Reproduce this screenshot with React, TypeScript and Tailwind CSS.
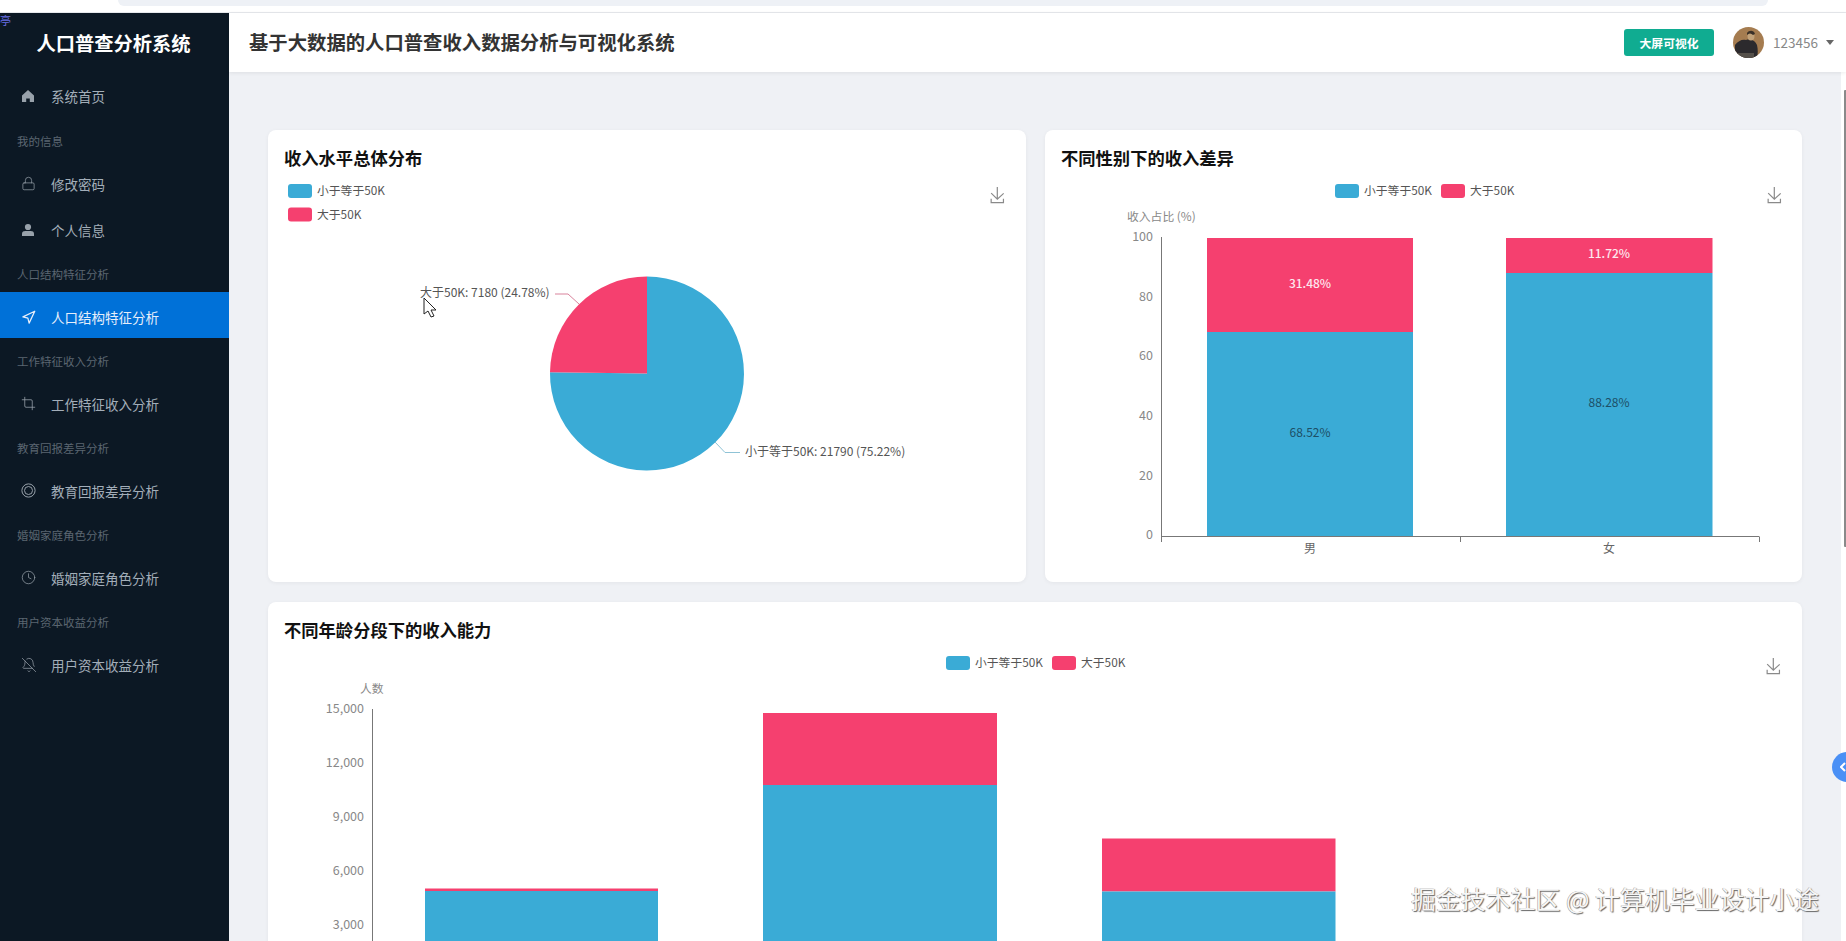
import { Crop, BellOff, Clock, Lock, Navigation } from 'lucide-react';
import type { ReactNode } from 'react';

const BLUE = '#3aabd6';
const PINK = '#f5406f';

function HomeIcon() {
  return (
    <svg width="14" height="14" viewBox="0 0 14 14" fill="currentColor">
      <path d="M7 1 L13 6.4 V13 H8.8 V9.4 H5.2 V13 H1 V6.4 Z" />
    </svg>
  );
}

function UserIcon() {
  return (
    <svg width="14" height="14" viewBox="0 0 14 14" fill="currentColor">
      <circle cx="7" cy="4" r="3.1" />
      <path d="M1 13 V10.6 C1 8.8 2.6 8 4.2 8 H9.8 C11.4 8 13 8.8 13 10.6 V13 Z" />
    </svg>
  );
}

function RingIcon() {
  return (
    <svg width="15" height="15" viewBox="0 0 15 15" fill="none" stroke="currentColor" strokeWidth="1">
      <circle cx="7.5" cy="7.5" r="6.6" />
      <circle cx="7.5" cy="7.5" r="4" />
    </svg>
  );
}

type NavEntry = { group?: string; label: string; icon: ReactNode; active?: boolean };

const nav: NavEntry[] = [
  { label: '系统首页', icon: <HomeIcon /> },
  { group: '我的信息', label: '修改密码', icon: <Lock size={15} strokeWidth={1.15} /> },
  { label: '个人信息', icon: <UserIcon /> },
  { group: '人口结构特征分析', label: '人口结构特征分析', icon: <Navigation size={15} strokeWidth={2} />, active: true },
  { group: '工作特征收入分析', label: '工作特征收入分析', icon: <Crop size={15} strokeWidth={1.25} /> },
  { group: '教育回报差异分析', label: '教育回报差异分析', icon: <RingIcon /> },
  { group: '婚姻家庭角色分析', label: '婚姻家庭角色分析', icon: <Clock size={15} strokeWidth={1.15} /> },
  { group: '用户资本收益分析', label: '用户资本收益分析', icon: <BellOff size={16} strokeWidth={1.1} /> },
];

function Sidebar() {
  return (
    <aside className="w-[229px] shrink-0 bg-[#0c1824]">
      <div className="h-[58.6px] flex items-center justify-center pt-[2px] pr-[2px] text-[19.3px] font-bold text-white">
        人口普查分析系统
      </div>
      {nav.map((item) => (
        <div key={item.label}>
          {item.group && (
            <div className="h-[40.7px] pt-[6px] pl-[17px] flex items-center text-[11.5px] text-[#5b6671]">
              {item.group}
            </div>
          )}
          <div
            className={`h-[46.3px] pt-[4px] pl-[21px] flex items-center text-[13.5px] ${
              item.active ? 'bg-[#0071d8] text-[#e6eefa]' : 'text-[#a3aeb9]'
            } ${item.group || item.label !== '系统首页' ? '' : 'pb-[2px]'}`}
          >
            <span className={`w-[30px] flex ${item.active ? 'text-[#e6eefa]' : 'text-[#98a1aa]'}`}>{item.icon}</span>
            {item.label}
          </div>
        </div>
      ))}
    </aside>
  );
}

function Header() {
  return (
    <header className="h-[59px] shrink-0 bg-white shadow-[0_1px_4px_rgba(0,0,0,0.08)] flex items-center pl-[20px] pr-[12px] relative">
      <h1 className="text-[19.35px] font-bold text-[#333]">基于大数据的人口普查收入数据分析与可视化系统</h1>
      <button className="ml-auto w-[90px] h-[27px] rounded-[3px] bg-[#10ac91] text-white text-[11.8px] font-bold">
        大屏可视化
      </button>
      <svg className="ml-[19px]" width="31" height="31" viewBox="0 0 31 31">
        <clipPath id="avatar-clip">
          <circle cx="15.5" cy="15.5" r="15.5" />
        </clipPath>
        <g clipPath="url(#avatar-clip)">
          <rect width="31" height="31" fill="#a57c50" />
          <path d="M2 31 V18 C5 14 9 12 13 13 C16 11 22 13 24 18 C25 22 25 27 24 31 Z" fill="#2c2a2d" />
          <ellipse cx="18" cy="9" rx="3.5" ry="4.5" fill="#c2a27a" />
          <path d="M14 6 C16 3 21 3 22 7 L20 8 C18 6 16 6 14 8 Z" fill="#3a3028" />
          <rect x="4" y="26" width="17" height="5" fill="#55504a" />
        </g>
      </svg>
      <span className="ml-[9px] text-[13.5px] text-[#888]">123456</span>
      <svg className="ml-[8px]" width="8" height="5" viewBox="0 0 8 5" fill="#666">
        <path d="M0 0 H8 L4 5 Z" />
      </svg>
    </header>
  );
}

function SaveIcon({ x, y }: { x: number; y: number }) {
  return (
    <path
      transform={`translate(${x},${y}) scale(0.25,0.27)`}
      d="M4.7,22.9 L29.3,45.5 L54.7,23.4 M4.6,43.6 L4.6,58 L53.8,58 L53.8,43.6 M29.2,45.1 L29.2,0"
      fill="none"
      stroke="#8a8a8a"
      strokeWidth="1.2"
      vectorEffect="non-scaling-stroke"
    />
  );
}

function LegendItem({ x, y, color, label }: { x: number; y: number; color: string; label: string }) {
  return (
    <g>
      <rect x={x} y={y} width="24" height="14" rx="3" fill={color} />
      <text x={x + 29} y={y + 11} fontSize="11.8" fill="#555">
        {label}
      </text>
    </g>
  );
}

function YTicks({ x, ticks }: { x: number; ticks: [string, number][] }) {
  return (
    <g fontSize="12.5" fill="#888" textAnchor="end">
      {ticks.map(([label, y]) => (
        <text key={label} x={x} y={y + 4}>
          {label}
        </text>
      ))}
    </g>
  );
}

function PieChart() {
  return (
    <svg className="block" width="758" height="405" viewBox="268 177 758 405">
      <LegendItem x={288} y={184} color={BLUE} label="小于等于50K" />
      <LegendItem x={288} y={207.5} color={PINK} label="大于50K" />
      <SaveIcon x={990} y={187} />
      <path d="M647 373.5 L647 276.5 A97 97 0 1 1 550 372.2 Z" fill={BLUE} />
      <path d="M647 373.5 L550 372.2 A97 97 0 0 1 647 276.5 Z" fill={PINK} />
      <path d="M579 304 L568 294 L555 294" fill="none" stroke="#d9839c" />
      <path d="M715 442 L725 452.5 L740 452.5" fill="none" stroke="#8fc3d6" />
      <text x="420" y="297" fontSize="12" fill="#555">
        大于50K: 7180 (24.78%)
      </text>
      <text x="745" y="456" fontSize="12" fill="#555">
        小于等于50K: 21790 (75.22%)
      </text>
      {/* mouse pointer caught in the capture */}
      <path
        d="M424 298 L424 314 L428 311 L431 317 L434 316 L431 310 L436 310 Z"
        fill="#fff"
        stroke="#222"
        strokeWidth="1"
      />
    </svg>
  );
}

function GenderChart() {
  return (
    <svg className="block" width="757" height="405" viewBox="1045 177 757 405">
      <LegendItem x={1335} y={184} color={BLUE} label="小于等于50K" />
      <LegendItem x={1441} y={184} color={PINK} label="大于50K" />
      <SaveIcon x={1767} y={187} />
      <text x="1127" y="221" fontSize="11.8" fill="#888">
        收入占比 (%)
      </text>
      <YTicks
        x={1153}
        ticks={[
          ['100', 237],
          ['80', 297],
          ['60', 356],
          ['40', 416],
          ['20', 476],
          ['0', 535],
        ]}
      />
      <rect x="1207" y="238" width="206" height="94" fill={PINK} />
      <rect x="1207" y="332" width="206" height="205" fill={BLUE} />
      <rect x="1506" y="238" width="206.5" height="35" fill={PINK} />
      <rect x="1506" y="273" width="206.5" height="264" fill={BLUE} />
      <path d="M1161.5 237 V537 M1161.5 536.5 H1759.5 M1161.5 537 V542 M1460.5 537 V542 M1759.5 537 V542" fill="none" stroke="#777" />
      <g fontSize="12" textAnchor="middle">
        <text x="1310" y="288" fill="#fde8ee" fontWeight="500">
          31.48%
        </text>
        <text x="1609" y="258" fill="#fde8ee" fontWeight="500">
          11.72%
        </text>
        <text x="1310" y="437" fill="#1d4f66">
          68.52%
        </text>
        <text x="1609" y="407" fill="#1d4f66">
          88.28%
        </text>
        <text x="1310" y="553" fill="#666">
          男
        </text>
        <text x="1609" y="553" fill="#666">
          女
        </text>
      </g>
    </svg>
  );
}

function AgeChart() {
  return (
    <svg className="block" width="1534" height="301" viewBox="268 649 1534 301">
      <LegendItem x={946} y={656} color={BLUE} label="小于等于50K" />
      <LegendItem x={1052} y={656} color={PINK} label="大于50K" />
      <SaveIcon x={1766} y={658} />
      <text x="360" y="693" fontSize="11.8" fill="#888">
        人数
      </text>
      <YTicks
        x={364}
        ticks={[
          ['15,000', 709],
          ['12,000', 763],
          ['9,000', 817],
          ['6,000', 871],
          ['3,000', 925],
        ]}
      />
      <rect x="425" y="888.5" width="233" height="2.5" fill={PINK} />
      <rect x="425" y="891" width="233" height="60" fill={BLUE} />
      <rect x="763" y="713" width="234" height="72" fill={PINK} />
      <rect x="763" y="785" width="234" height="170" fill={BLUE} />
      <rect x="1102" y="838.5" width="233.5" height="53" fill={PINK} />
      <rect x="1102" y="891.5" width="233.5" height="60" fill={BLUE} />
      <path d="M372.5 709 V950" fill="none" stroke="#777" />
    </svg>
  );
}

function Card({ title, children }: { title: string; children: ReactNode }) {
  return (
    <section className="bg-white rounded-[8px] shadow-[0_1px_4px_rgba(0,0,0,0.05)]">
      <h2 className="h-[47px] pl-[16px] pt-[9px] flex items-center text-[17.3px] font-bold text-[#111]">{title}</h2>
      {children}
    </section>
  );
}

export default function App() {
  return (
    <div className="relative w-[1846px] h-[941px] overflow-hidden bg-white font-['Noto_Sans_CJK_SC','Noto_Sans',sans-serif]">
      <div className="h-[13px] border-b border-[#e6e8ec] bg-white">
        <div className="ml-[118px] w-[1650px] h-[6px] rounded-b-[8px] bg-[#eef1f6]" />
      </div>
      <div className="flex h-[928px]">
        <Sidebar />
        <div className="flex-1 flex flex-col min-w-0">
          <Header />
          <div className="flex flex-1 min-h-0">
            <main className="w-[1612px] bg-[#eff1f5] pt-[58px] px-[39px] overflow-hidden">
              <div className="grid grid-cols-[758px_757px] gap-x-[19px] gap-y-[20px]">
                <Card title="收入水平总体分布">
                  <PieChart />
                </Card>
                <Card title="不同性别下的收入差异">
                  <GenderChart />
                </Card>
                <div className="col-span-2">
                  <Card title="不同年龄分段下的收入能力">
                    <AgeChart />
                  </Card>
                </div>
              </div>
            </main>
            <div className="w-[5px] bg-white pt-[18px] pl-[3px]">
              <div className="h-[457px] bg-[#8a8a8a] rounded-l-[1px]" />
            </div>
          </div>
        </div>
      </div>

      {/* overlays captured with the page */}
      <span className="absolute left-0 top-[12px] text-[11px] leading-[16px] text-[#6a70e6]">亭</span>
      <div className="absolute left-[1832px] top-[752px] w-[30px] h-[30px] rounded-full bg-[#4a90f5] flex items-center pl-[8px]">
        <svg width="6" height="10" viewBox="0 0 6 10" fill="none" stroke="#fff" strokeWidth="2">
          <path d="M5 1 L1 5 L5 9" />
        </svg>
      </div>
      <div className="absolute left-[1411px] top-[880px] text-[24.9px] leading-[36px] whitespace-nowrap text-[#f6f6f6] [text-shadow:1px_1px_1px_#666,-0.5px_-0.5px_0.5px_#999]">
        掘金技术社区 @ 计算机毕业设计小途
      </div>
    </div>
  );
}
